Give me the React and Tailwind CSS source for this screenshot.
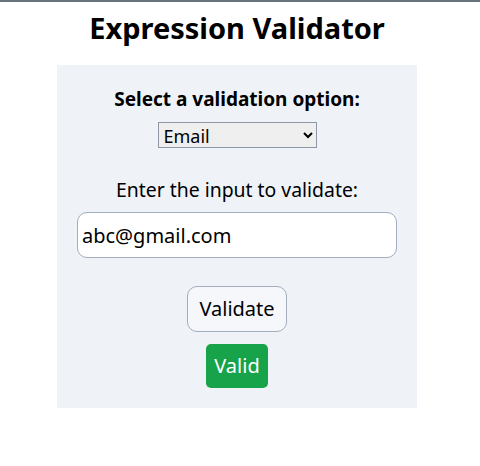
export default function App() {
  return (
    <div className="min-h-[466px] bg-white text-black" style={{ fontFamily: '"Noto Sans", "Open Sans", sans-serif' }}>
      <div className="h-[2px] bg-[#67747c]" />
      <div className="w-[474px] flex flex-col items-center">
        <h1 className="mt-[7px] text-[29px] font-bold leading-[38px]">Expression Validator</h1>

        <div className="mt-[18px] w-[360px] bg-[#eff3f8] flex flex-col items-center pt-[20px] pb-[20px]">
          <label className="text-[19px] font-bold leading-[28px]">Select a validation option:</label>
          <select
            defaultValue="email"
            className="mt-[9px] w-[159px] h-[26px] text-[18px] leading-[22px] bg-[#efefef] border border-[#8f98a4] pl-[1px]"
          >
            <option value="email">Email</option>
            <option value="phone">Phone</option>
            <option value="url">URL</option>
          </select>

          <label className="mt-[28px] text-[19.4px] leading-[28px]">Enter the input to validate:</label>
          <input
            type="text"
            defaultValue="abc@gmail.com"
            className="mt-[8px] w-[320px] h-[46px] px-[4px] text-[20px] bg-white border border-[#a3adbd] rounded-[10px] outline-none"
          />

          <button className="mt-[28px] w-[100px] h-[46px] text-[20px] bg-[#f5f7fa] border border-[#a3adbd] rounded-[10px]">
            Validate
          </button>

          <div className="mt-[12px] h-[44px] px-[8px] flex items-center bg-[#17a34a] text-white text-[20px] rounded-[5px]">
            Valid
          </div>
        </div>
      </div>
    </div>
  );
}
